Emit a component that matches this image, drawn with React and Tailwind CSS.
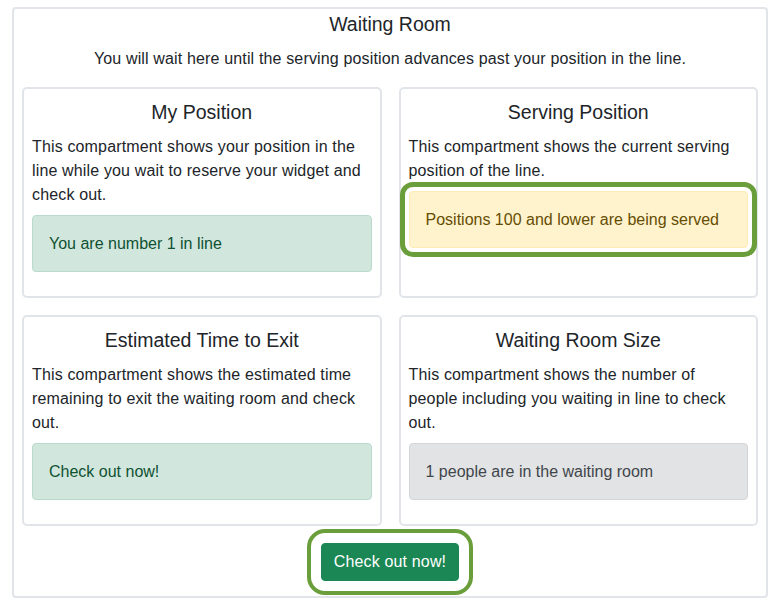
import React from "react";

function Card({ title, children, alert }) {
  return (
    <div className="border-2 border-[#e1e4e8] rounded-[5px] px-[8px] pt-[11px] pb-[24px] flex flex-col">
      <h5 className="text-[19.5px] leading-[24px] text-center text-[#212529] mb-[11px]">{title}</h5>
      <p className="text-[16px] leading-[24px] tracking-[0.15px] text-[#212529] mb-[8px]">{children}</p>
      {alert}
    </div>
  );
}

function Alert({ tone, children, ring }) {
  const cls =
    tone === "success"
      ? "bg-[#d1e7dd] border-[#badbcc] text-[#0f5132]"
      : tone === "warning"
      ? "bg-[#fff3cd] border-[#ffecb5] text-[#664d03]"
      : "bg-[#e2e3e5] border-[#d3d6d8] text-[#41464b]";
  return (
    <div
      className={
        "border rounded-[4px] px-[16px] py-[16px] text-[16px] leading-[23px] " +
        cls +
        (ring ? " outline-[5px] outline-solid outline-offset-[4px] outline-[#6a9e3b]" : "")
      }
    >
      {children}
    </div>
  );
}

export default function App() {
  return (
    <div className="w-[777px] h-[608px] bg-white pt-[7px] px-[12px]" style={{ fontFamily: '"Liberation Sans", Arial, sans-serif' }}>
      <div className="w-[756px] h-[591px] border-2 border-[#e1e4e8] rounded-[4px] px-[8px] pt-[3px] flex flex-col">
        <h4 className="text-[19.5px] leading-[24px] text-center text-[#212529]">Waiting Room</h4>
        <p className="text-[16px] leading-[24px] tracking-[0.15px] text-center text-[#212529] mt-[11px]">
          You will wait here until the serving position advances past your position in the line.
        </p>
        <div className="grid grid-cols-2 gap-[17px] mt-[16px]">
          <Card title="My Position" alert={<Alert tone="success">You are number 1 in line</Alert>}>
            This compartment shows your position in the line while you wait to reserve your widget and check out.
          </Card>
          <Card
            title="Serving Position"
            alert={
              <Alert tone="warning" ring>
                Positions 100 and lower are being served
              </Alert>
            }
          >
            This compartment shows the current serving position of the line.
          </Card>
          <Card title="Estimated Time to Exit" alert={<Alert tone="success">Check out now!</Alert>}>
            This compartment shows the estimated time remaining to exit the waiting room and check out.
          </Card>
          <Card title="Waiting Room Size" alert={<Alert tone="secondary">1 people are in the waiting room</Alert>}>
            This compartment shows the number of people including you waiting in line to check out.
          </Card>
        </div>
        <div className="flex justify-center mt-[17px]">
          <button className="bg-[#1a8754] text-white text-[16px] leading-[24px] tracking-[0.15px] px-[12px] py-[6px] border border-[#1a8754] rounded-[4px] outline-4 outline-solid outline-offset-[10px] outline-[#6a9e3b]">
            Check out now!
          </button>
        </div>
      </div>
    </div>
  );
}
